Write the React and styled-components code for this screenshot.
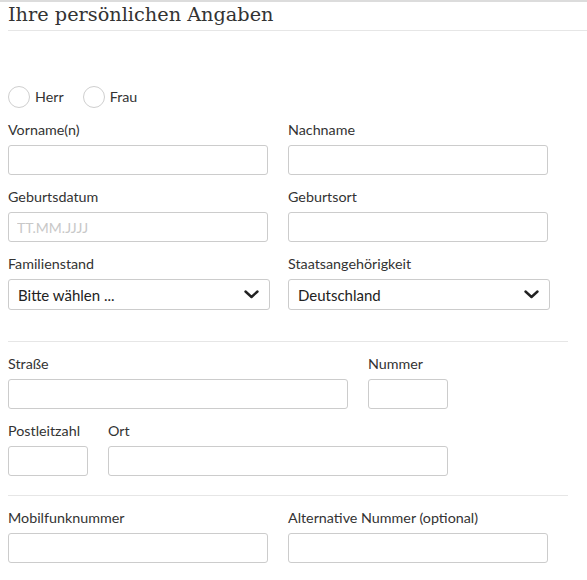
import styled, { createGlobalStyle } from 'styled-components';

const GlobalStyle = createGlobalStyle`
  html, body {
    margin: 0;
    padding: 0;
    background: #fff;
  }
  body {
    font-family: Lato, "Noto Sans", sans-serif;
    color: #333;
  }
  * {
    box-sizing: border-box;
  }
`;

const Page = styled.div`
  width: 587px;
  border-top: 2px solid #dcdcdc;
  padding: 0 0 0 8px;
`;

const Title = styled.h2`
  margin: 0;
  padding: 2px 0 5px;
  font-family: "DejaVu Serif", "Liberation Serif", serif;
  font-weight: normal;
  font-size: 19.3px;
  line-height: 21px;
  color: #333;
  border-bottom: 1px solid #e6e6e6;
`;

const RadioRow = styled.div`
  display: flex;
  align-items: center;
  gap: 19px;
  margin-top: 55px;
  height: 22px;
`;

const RadioOption = styled.label`
  display: flex;
  align-items: center;
  gap: 5px;
  font-size: 14.3px;
  line-height: 20px;
`;

const RadioCircle = styled.span`
  width: 22px;
  height: 22px;
  border-radius: 50%;
  border: 1px solid #cfcfcf;
  background: #fff;
`;

const Row = styled.div`
  display: flex;
  gap: ${({ $gap }) => $gap ?? 20}px;
  margin-top: 12px;
`;

const Field = styled.div`
  display: flex;
  flex-direction: column;
  width: ${({ $w }) => $w}px;
`;

const Label = styled.span`
  font-size: 14.3px;
  line-height: 20px;
  height: 20px;
  margin-bottom: 5px;
  color: #333;
  white-space: nowrap;
`;

const Input = styled.input`
  height: 30px;
  width: 100%;
  border: 1px solid #cccccc;
  border-radius: 3px;
  padding: 0 8px;
  font-family: Lato, "Noto Sans", sans-serif;
  font-size: 14px;
  color: #333;
  background: #fff;
  outline: none;
  &::placeholder {
    color: #c8c8c8;
  }
`;

const Select = styled.div`
  height: 31px;
  width: 100%;
  border: 1px solid #cccccc;
  border-radius: 3px;
  padding: 0 10px 0 9px;
  display: flex;
  align-items: center;
  justify-content: space-between;
  font-size: 15px;
  color: #222;
  background: #fff;
`;

const Divider = styled.hr`
  border: none;
  border-top: 1px solid #e6e6e6;
  width: 560px;
  margin: ${({ $top }) => $top}px 0 0;
  height: 0;
`;

const Chevron = () => (
  <svg width="15" height="9" viewBox="0 0 15 9" fill="none">
    <path d="M1.5 1.5 L7.5 7 L13.5 1.5" stroke="#222" strokeWidth="2.4" strokeLinecap="round" strokeLinejoin="round" />
  </svg>
);

const TextField = ({ label, w = 260, placeholder }) => (
  <Field $w={w}>
    <Label>{label}</Label>
    <Input placeholder={placeholder} />
  </Field>
);

const SelectField = ({ label, value }) => (
  <Field $w={262}>
    <Label>{label}</Label>
    <Select>
      <span>{value}</span>
      <Chevron />
    </Select>
  </Field>
);

export default function App() {
  return (
    <Page>
      <GlobalStyle />
      <Title>Ihre persönlichen Angaben</Title>

      <RadioRow>
        <RadioOption>
          <RadioCircle />
          Herr
        </RadioOption>
        <RadioOption>
          <RadioCircle />
          Frau
        </RadioOption>
      </RadioRow>

      <Row>
        <TextField label="Vorname(n)" />
        <TextField label="Nachname" />
      </Row>
      <Row>
        <TextField label="Geburtsdatum" placeholder="TT.MM.JJJJ" />
        <TextField label="Geburtsort" />
      </Row>
      <Row $gap={18}>
        <SelectField label="Familienstand" value="Bitte wählen ..." />
        <SelectField label="Staatsangehörigkeit" value="Deutschland" />
      </Row>

      <Divider $top={31} />

      <Row>
        <TextField label="Straße" w={340} />
        <TextField label="Nummer" w={80} />
      </Row>
      <Row>
        <TextField label="Postleitzahl" w={80} />
        <TextField label="Ort" w={340} />
      </Row>

      <Divider $top={19} />

      <Row>
        <TextField label="Mobilfunknummer" />
        <TextField label="Alternative Nummer (optional)" />
      </Row>
      <Row>
        <TextField label="E-Mail-Adresse" />
      </Row>
    </Page>
  );
}
